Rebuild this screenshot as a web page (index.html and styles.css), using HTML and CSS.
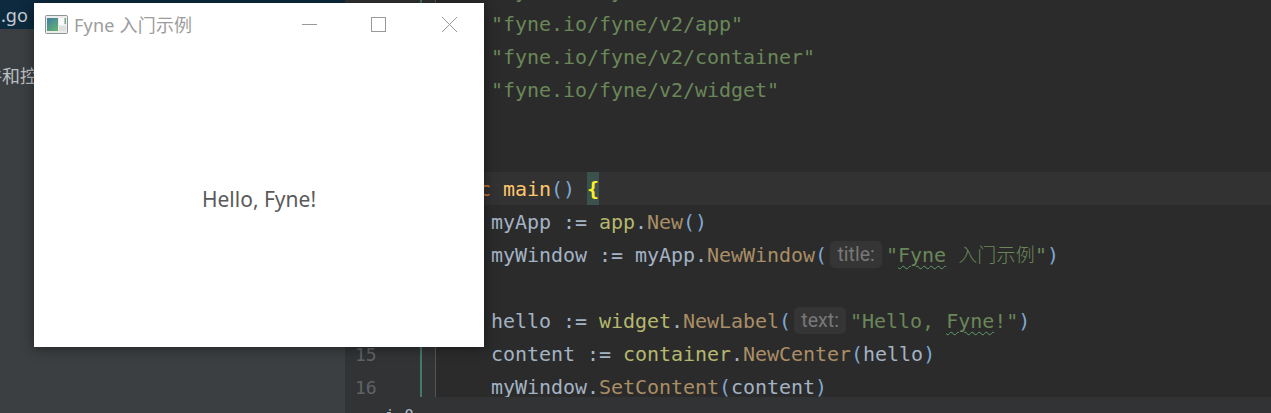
FILE: index.html
```html
<!DOCTYPE html>
<html lang="zh">
<head>
<meta charset="utf-8">
<title>Fyne 入门示例</title>
<link rel="stylesheet" href="styles.css">
</head>
<body>
<div class="ide">
  <aside class="sidebar">
    <div class="file-tab">.go</div>
    <p class="side-text">件和控件</p>
  </aside>
  <main class="editor">
    <div class="code-area">
      <div class="gutter">
        <div class="gutter-nums">
          <div class="num">4</div><div class="num">5</div><div class="num">6</div><div class="num">7</div>
          <div class="num">8</div><div class="num">9</div><div class="num">10</div><div class="num">11</div>
          <div class="num">12</div><div class="num">13</div><div class="num">14</div><div class="num">15</div>
          <div class="num">16</div>
        </div>
        <div class="change-mark"></div>
      </div>
      <div class="code">
        <div class="line">    <span class="str">"fyne.io/fyne/v2"</span></div>
        <div class="line">    <span class="str">"fyne.io/fyne/v2/app"</span></div>
        <div class="line">    <span class="str">"fyne.io/fyne/v2/container"</span></div>
        <div class="line">    <span class="str">"fyne.io/fyne/v2/widget"</span></div>
        <div class="line"></div>
        <div class="line"></div>
        <div class="line current"><span class="kw">func</span> <span class="fn">main</span><span class="paren">()</span> <span class="brace">{</span></div>
        <div class="line">    <span class="var">myApp :=</span> <span class="pkg">app</span><span class="var">.</span><span class="method">New</span><span class="paren">()</span></div>
        <div class="line">    <span class="var">myWindow := myApp.</span><span class="method">NewWindow</span><span class="paren">(</span><span class="hint">title:</span><span class="str">"<span class="typo">Fyne</span> <span class="cjk">入门示例</span>"</span><span class="paren">)</span></div>
        <div class="line"></div>
        <div class="line">    <span class="var">hello :=</span> <span class="pkg">widget</span><span class="var">.</span><span class="method">NewLabel</span><span class="paren">(</span><span class="hint">text:</span><span class="str">"Hello, <span class="typo">Fyne</span>!"</span><span class="paren">)</span></div>
        <div class="line">    <span class="var">content :=</span> <span class="pkg">container</span><span class="var">.</span><span class="method">NewCenter</span><span class="paren">(</span><span class="var">hello</span><span class="paren">)</span></div>
        <div class="line">    <span class="var">myWindow.</span><span class="method">SetContent</span><span class="paren">(</span><span class="var">content</span><span class="paren">)</span></div>
      </div>
    </div>
    <div class="breadcrumb">i 0</div>
  </main>
</div>

<section class="window">
  <header class="titlebar">
    <svg class="app-icon" width="23" height="19" viewBox="0 0 23 19">
      <defs>
        <linearGradient id="pane" x1="0" y1="0" x2="0.7" y2="1">
          <stop offset="0" stop-color="#3f7ea6"/>
          <stop offset="1" stop-color="#62ad74"/>
        </linearGradient>
      </defs>
      <rect x="0.5" y="0.5" width="22" height="18" rx="1" fill="#ececec" stroke="#8d9594"/>
      <rect x="2" y="3" width="11" height="13" fill="url(#pane)"/>
      <rect x="14" y="3" width="5" height="7" fill="#fafafa"/>
      <rect x="19.5" y="3" width="1.5" height="6" fill="#7fa88f"/>
      <rect x="14" y="11" width="7" height="5" fill="#dfdfdf"/>
    </svg>
    <span class="win-title">Fyne 入门示例</span>
    <div class="win-controls">
      <div class="win-btn">
        <svg width="15" height="15" viewBox="0 0 15 15"><path d="M0 7.5H15" stroke="#999" fill="none"/></svg>
      </div>
      <div class="win-btn win-btn-max">
        <svg width="15" height="15" viewBox="0 0 15 15"><rect x="0.5" y="0.5" width="14" height="14" stroke="#999" fill="none"/></svg>
      </div>
      <div class="win-btn">
        <svg width="15" height="15" viewBox="0 0 15 15"><path d="M0 0L15 15M15 0L0 15" stroke="#999" fill="none"/></svg>
      </div>
    </div>
  </header>
  <div class="win-body">Hello, Fyne!</div>
</section>
</body>
</html>
```

FILE: styles.css
```css
* { box-sizing: border-box; }
html, body {
  margin: 0;
  height: 100%;
  overflow: hidden;
  background: #2b2b2b;
}
.ide {
  display: grid;
  grid-template-columns: 345px 1fr;
  height: 413px;
}
.sidebar {
  background: #3c3f41;
  overflow: hidden;
  font-family: "Noto Sans", "Noto Sans CJK SC", sans-serif;
  color: #c6ccd0;
}
.file-tab {
  height: 29px;
  background: #0d2a3f;
  font-size: 18px;
  line-height: 30px;
  padding-left: 1px;
}
.side-text {
  margin: 34px 0 0 -16px;
  font-size: 18px;
  line-height: 26px;
  color: #b9bec2;
}
.editor {
  display: flex;
  flex-direction: column;
  min-width: 0;
  height: 413px;
}
.code-area {
  flex: 1;
  display: flex;
  min-height: 0;
  overflow: hidden;
}
.gutter {
  width: 91px;
  flex: none;
  background: #313335;
  border-right: 1px solid #555555;
  display: flex;
  overflow: hidden;
}
.gutter-nums {
  width: 75px;
  margin-top: -26px;
}
.num {
  height: 33px;
  padding-left: 10px;
  font: 18px/35px "DejaVu Sans Mono", monospace;
  color: #606366;
}
.change-mark {
  width: 2px;
  background: #45796b;
}
.code {
  flex: 1;
  margin-top: -26px;
  min-width: 0;
  font-family: "DejaVu Sans Mono", "Noto Sans CJK SC", monospace;
  font-size: 20px;
  letter-spacing: -0.04px;
  color: #a3b3c4;
}
.line {
  height: 33px;
  line-height: 35px;
  padding-left: 7px;
  white-space: pre;
}
.line.current { background: #323232; }
.str { color: #6a8759; }
.kw { color: #cc7832; }
.fn { color: #ffc66d; }
.paren { color: #7fa8d4; }
.var { color: #a3b3c4; }
.pkg { color: #b5b86e; }
.method { color: #a98e66; }
.brace {
  display: inline-block;
  height: 33px;
  vertical-align: top;
  background: #3b514d;
  color: #ffef28;
  font-weight: bold;
}
.hint {
  display: inline-block;
  height: 27px;
  width: 52px;
  margin: 3px 4px 0 3px;
  border-radius: 5px;
  background: #353535;
  color: #787878;
  font: 19.5px/28px Roboto, sans-serif;
  letter-spacing: 0;
  text-align: center;
  vertical-align: top;
}
.typo {
  text-decoration: underline wavy #5f9c68 1px;
  text-underline-offset: 3px;
}
.cjk {
  font-family: "Noto Sans CJK SC", sans-serif;
  font-size: 19px;
  line-height: 1;
  letter-spacing: 0.2px;
  font-weight: 300;
}
.breadcrumb {
  height: 16px;
  flex: none;
  overflow: hidden;
  background: #313335;
  padding-left: 40px;
  font: 16px/38px "DejaVu Sans Mono", monospace;
  color: #a9b7c6;
  white-space: pre;
}

/* The floating application window sits over the IDE, as on a desktop. */
.window {
  position: absolute;
  left: 34px;
  top: 3px;
  width: 450px;
  height: 344px;
  background: #ffffff;
  box-shadow: 0 1px 12px rgba(0, 0, 0, 0.45);
  display: flex;
  flex-direction: column;
  font-family: "Noto Sans", "Noto Sans CJK SC", sans-serif;
}
.titlebar {
  height: 42px;
  flex: none;
  display: flex;
  align-items: center;
  padding-left: 11px;
}
.app-icon { flex: none; }
.win-title {
  margin-left: 6px;
  font-size: 18px;
  letter-spacing: 0.2px;
  color: #9c9c9c;
  white-space: nowrap;
}
.win-controls {
  margin-left: auto;
  display: flex;
  align-self: stretch;
}
.win-btn {
  width: 70px;
  display: flex;
  align-items: center;
  justify-content: center;
}
.win-btn-max { padding-right: 1px; }
.win-btn svg { display: block; }
.win-body {
  flex: 1;
  display: flex;
  align-items: center;
  justify-content: center;
  padding-top: 6px;
  font-size: 21px;
  color: #5a5a5a;
}
```
